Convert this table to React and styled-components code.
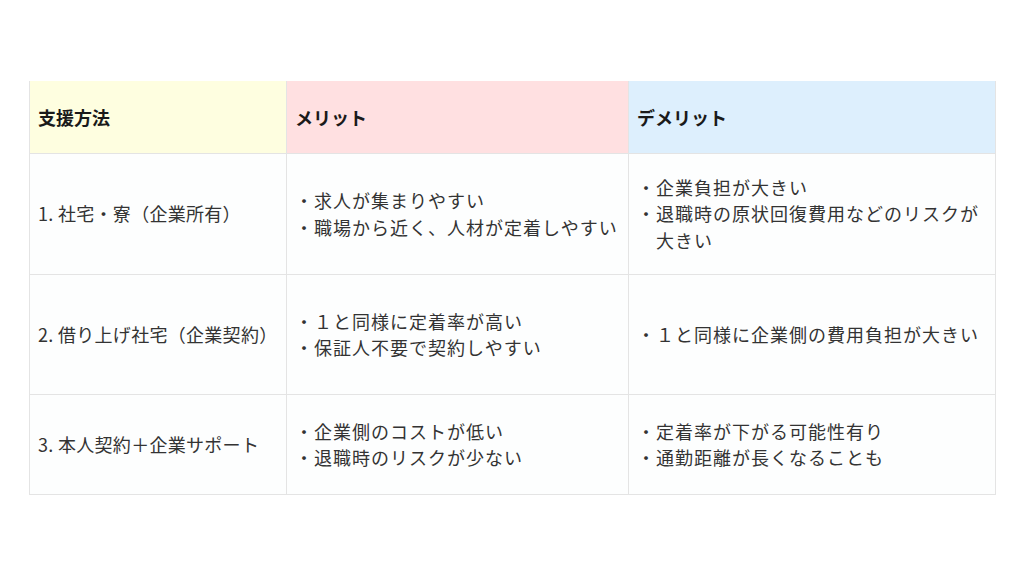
import React from 'react';
import styled, { createGlobalStyle } from 'styled-components';

const GlobalStyle = createGlobalStyle`
  html, body {
    margin: 0;
    padding: 0;
    background: #ffffff;
  }
  body {
    font-family: "Noto Sans CJK JP", "Noto Sans", sans-serif;
    color: #333333;
  }
`;

const Page = styled.div`
  width: 1024px;
  height: 576px;
  padding: 81px 0 0 29px;
  box-sizing: border-box;
`;

const Table = styled.table`
  width: 966px;
  border-collapse: collapse;
  table-layout: fixed;
`;

const HeadCell = styled.th`
  height: 72px;
  padding: 0 8px;
  box-sizing: border-box;
  text-align: left;
  vertical-align: middle;
  font-size: 18px;
  font-weight: 700;
  color: #1a1a1a;
  background: ${p => p.$bg};
  border-left: 1px solid #e4e4e4;
  border-right: 1px solid #e4e4e4;
`;

const Row = styled.tr`
  height: ${p => p.$h}px;
`;

const Cell = styled.td`
  padding: 0 8px;
  vertical-align: middle;
  font-size: 18px;
  letter-spacing: 1px;
  line-height: 26.5px;
  border: 1px solid #e4e4e4;
  background: #fdfefe;
`;

const MethodCell = styled(Cell)`
  padding: 0 4px 0 8px;
  letter-spacing: 0.3px;
  white-space: nowrap;
`;

const List = styled.ul`
  list-style: none;
  margin: 0;
  padding: 0;
`;

const Item = styled.li`
  display: flex;
`;

const Dot = styled.span`
  flex: 0 0 19px;
`;

const columns = [
  { label: '支援方法', bg: '#fefee0', width: 257 },
  { label: 'メリット', bg: '#ffe0e1', width: 342 },
  { label: 'デメリット', bg: '#ddeffd', width: 367 },
];

const rows = [
  {
    h: 121,
    method: '1. 社宅・寮（企業所有）',
    merits: ['求人が集まりやすい', '職場から近く、人材が定着しやすい'],
    demerits: ['企業負担が大きい', '退職時の原状回復費用などのリスクが大きい'],
  },
  {
    h: 120,
    method: '2. 借り上げ社宅（企業契約）',
    merits: ['１と同様に定着率が高い', '保証人不要で契約しやすい'],
    demerits: ['１と同様に企業側の費用負担が大きい'],
  },
  {
    h: 100,
    method: '3. 本人契約＋企業サポート',
    merits: ['企業側のコストが低い', '退職時のリスクが少ない'],
    demerits: ['定着率が下がる可能性有り', '通勤距離が長くなることも'],
  },
];

const Bullets = ({ items }) => (
  <List>
    {items.map(text => (
      <Item key={text}>
        <Dot>・</Dot>
        <span>{text}</span>
      </Item>
    ))}
  </List>
);

export default function App() {
  return (
    <Page>
      <GlobalStyle />
      <Table>
        <colgroup>
          {columns.map(c => (
            <col key={c.label} style={{ width: c.width }} />
          ))}
        </colgroup>
        <thead>
          <tr>
            {columns.map(c => (
              <HeadCell key={c.label} $bg={c.bg}>{c.label}</HeadCell>
            ))}
          </tr>
        </thead>
        <tbody>
          {rows.map(r => (
            <Row key={r.method} $h={r.h}>
              <MethodCell>{r.method}</MethodCell>
              <Cell><Bullets items={r.merits} /></Cell>
              <Cell><Bullets items={r.demerits} /></Cell>
            </Row>
          ))}
        </tbody>
      </Table>
    </Page>
  );
}
